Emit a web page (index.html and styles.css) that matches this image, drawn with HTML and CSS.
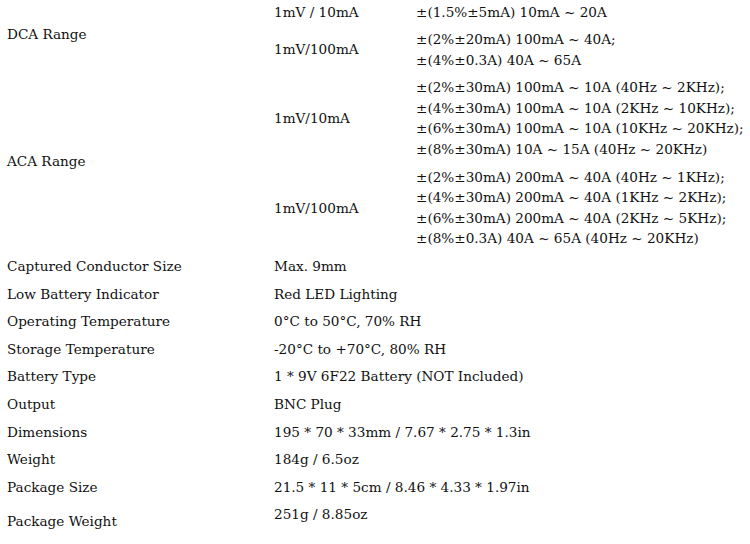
FILE: index.html
```html
<!DOCTYPE html>
<html>
<head>
<meta charset="utf-8">
<link rel="stylesheet" href="styles.css">
</head>
<body>
<table class="spec">
  <colgroup>
    <col class="c-label">
    <col class="c-scale">
    <col class="c-value">
  </colgroup>
  <tbody>
    <tr>
      <td class="label group" rowspan="2">DCA Range</td>
      <td class="scale">1mV / 10mA</td>
      <td class="value">±(1.5%±5mA) 10mA ~ 20A</td>
    </tr>
    <tr>
      <td class="scale">1mV/100mA</td>
      <td class="value">±(2%±20mA) 100mA ~ 40A;<br>±(4%±0.3A) 40A ~ 65A</td>
    </tr>
    <tr>
      <td class="label group" rowspan="2">ACA Range</td>
      <td class="scale">1mV/10mA</td>
      <td class="value">±(2%±30mA) 100mA ~ 10A (40Hz ~ 2KHz);<br>±(4%±30mA) 100mA ~ 10A (2KHz ~ 10KHz);<br>±(6%±30mA) 100mA ~ 10A (10KHz ~ 20KHz);<br>±(8%±30mA) 10A ~ 15A (40Hz ~ 20KHz)</td>
    </tr>
    <tr>
      <td class="scale">1mV/100mA</td>
      <td class="value">±(2%±30mA) 200mA ~ 40A (40Hz ~ 1KHz);<br>±(4%±30mA) 200mA ~ 40A (1KHz ~ 2KHz);<br>±(6%±30mA) 200mA ~ 40A (2KHz ~ 5KHz);<br>±(8%±0.3A) 40A ~ 65A (40Hz ~ 20KHz)</td>
    </tr>
    <tr><td class="label">Captured Conductor Size</td><td class="value" colspan="2">Max. 9mm</td></tr>
    <tr><td class="label">Low Battery Indicator</td><td class="value" colspan="2">Red LED Lighting</td></tr>
    <tr><td class="label">Operating Temperature</td><td class="value" colspan="2">0°C to 50°C, 70% RH</td></tr>
    <tr><td class="label">Storage Temperature</td><td class="value" colspan="2">-20°C to +70°C, 80% RH</td></tr>
    <tr><td class="label">Battery Type</td><td class="value" colspan="2">1 * 9V 6F22 Battery (NOT Included)</td></tr>
    <tr><td class="label">Output</td><td class="value" colspan="2">BNC Plug</td></tr>
    <tr><td class="label">Dimensions</td><td class="value" colspan="2">195 * 70 * 33mm / 7.67 * 2.75 * 1.3in</td></tr>
    <tr><td class="label">Weight</td><td class="value" colspan="2">184g / 6.5oz</td></tr>
    <tr><td class="label">Package Size</td><td class="value" colspan="2">21.5 * 11 * 5cm / 8.46 * 4.33 * 1.97in</td></tr>
    <tr class="last"><td class="label">Package Weight</td><td class="value top" colspan="2">251g / 8.85oz</td></tr>
  </tbody>
</table>
</body>
</html>
```

FILE: styles.css
```css
html, body {
  margin: 0;
  padding: 0;
  background: #ffffff;
}

body {
  font-family: "DejaVu Serif", "Liberation Serif", serif;
  font-size: 13.6px;
  color: #111111;
  overflow: hidden;
}

.spec {
  border-collapse: collapse;
  table-layout: fixed;
  width: 760px;
  margin-top: -2px;
}

.c-label { width: 267px; }
.c-scale { width: 142px; }
.c-value { width: 351px; }

.spec td {
  padding: 3.5px 7px;
  line-height: 20.6px;
  vertical-align: middle;
  white-space: nowrap;
}

.spec .group {
  padding-top: 1.5px;
  padding-bottom: 5.5px;
}

.spec .top {
  vertical-align: top;
}

.spec .last td {
  height: 34.6px;
}
```
